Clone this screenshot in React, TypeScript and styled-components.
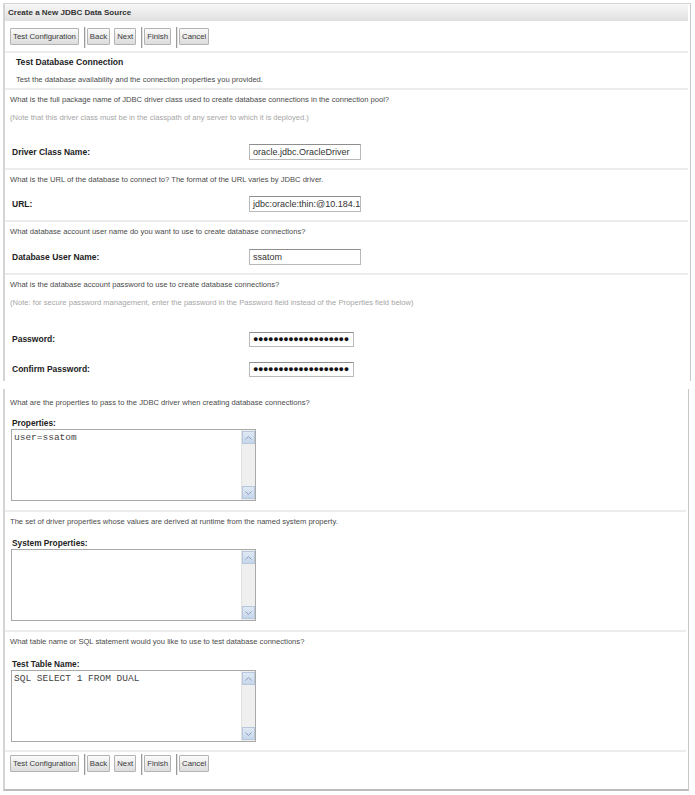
import styled, { createGlobalStyle } from "styled-components";

const GlobalStyle = createGlobalStyle`
  html, body {
    margin: 0;
    padding: 0;
    background: #ffffff;
  }
  body {
    font-family: "Liberation Sans", Arial, sans-serif;
    color: #333;
  }
`;

const Page = styled.div`
  width: 695px;
  height: 795px;
  padding: 3px 0 0 3px;
  box-sizing: border-box;
  display: flex;
  flex-direction: column;
  gap: 8px;
`;

const Panel = styled.div<{ $top?: boolean; $width: number }>`
  width: ${(p) => p.$width}px;
  box-sizing: border-box;
  border-left: 2px solid #d4d4d4;
  border-right: 1px solid #c8c8c8;
  ${(p) =>
    p.$top
      ? `border-top: 1px solid #d4d4d4;`
      : `border-bottom: 2px solid #bdbdbd;`}
  padding-right: 2px;
`;

const TitleBar = styled.div`
  height: 17px;
  display: flex;
  align-items: center;
  padding-left: 3px;
  background: linear-gradient(#f7f7f7, #e0e0e0);
  font-size: 8px;
  font-weight: bold;
  color: #333;
`;

const Toolbar = styled.div<{ $pad: number; $h: number }>`
  display: flex;
  align-items: flex-start;
  padding: ${(p) => p.$pad}px 0 0 5px;
  height: ${(p) => p.$h}px;
  box-sizing: border-box;
`;

const Button = styled.div<{ $gap?: number }>`
  height: 17px;
  box-sizing: border-box;
  padding: 0 2px;
  margin-left: ${(p) => p.$gap ?? 0}px;
  display: flex;
  align-items: center;
  border: 1px solid #b3b3b3;
  border-radius: 1px;
  background: linear-gradient(#fbfbfb, #dcdcdc);
  font-size: 7.8px;
  color: #3a3a3a;
`;

const Sep = styled.div`
  width: 1px;
  height: 21px;
  margin: -1px 2px 0 5px;
  background: #9a9a9a;
  box-shadow: 1px 0 0 #e2e2e2;
`;

const Section = styled.div<{ $pt?: number; $pb?: number }>`
  border-top: 2px solid #ececec;
  padding: ${(p) => p.$pt ?? 0}px 0 ${(p) => p.$pb ?? 0}px 0;
`;

const Line = styled.div<{ $h?: number; $indent?: number; $kind?: "q" | "note" | "head" }>`
  height: ${(p) => p.$h ?? 18}px;
  display: flex;
  align-items: center;
  padding-left: ${(p) => p.$indent ?? 5}px;
  font-size: ${(p) => (p.$kind === "head" ? 8.3 : 7.6)}px;
  font-weight: ${(p) => (p.$kind === "head" ? "bold" : "normal")};
  color: ${(p) => (p.$kind === "note" ? "#a6a6a6" : p.$kind === "head" ? "#222" : "#4a4a4a")};
  white-space: nowrap;
`;

const Heading = styled(Line)`
  font-size: 8.6px;
`;

const Spacer = styled.div<{ $h: number }>`
  height: ${(p) => p.$h}px;
`;

const FieldRow = styled.div`
  height: 22px;
  display: flex;
  align-items: center;
  padding-left: 7px;
`;

const Label = styled.div<{ $w?: number }>`
  width: ${(p) => p.$w ?? 237}px;
  font-size: 8.5px;
  font-weight: bold;
  color: #222;
  white-space: nowrap;
`;

const Input = styled.div<{ $w?: number; $pw?: boolean }>`
  width: ${(p) => p.$w ?? 112}px;
  height: ${(p) => (p.$pw ? 15 : 16)}px;
  box-sizing: border-box;
  border: 1px solid #b9b9b9;
  border-top-color: #8e8e8e;
  background: #fff;
  padding-left: 3px;
  display: flex;
  align-items: center;
  overflow: hidden;
  white-space: nowrap;
  font-size: 9px;
  letter-spacing: ${(p) => (p.$pw ? "-0.4px" : "0")};
  color: ${(p) => (p.$pw ? "#111" : "#333")};
`;

const TextBox = styled.div`
  margin-left: 6px;
  width: 245px;
  height: 72px;
  box-sizing: border-box;
  border: 1px solid #a9a9a9;
  display: flex;
  background: #fff;
`;

const TextContent = styled.div`
  flex: 1;
  padding: 2px 0 0 2px;
  font-family: "Liberation Mono", "Courier New", monospace;
  font-size: 9.5px;
  color: #444;
  white-space: pre;
`;

const Track = styled.div`
  width: 14px;
  background: #efefef;
  border-left: 1px solid #e2e2e2;
  display: flex;
  flex-direction: column;
  justify-content: space-between;
  padding: 1px 0;
  box-sizing: border-box;
`;

const Arrow = styled.div`
  width: 13px;
  height: 13px;
  box-sizing: border-box;
  border: 1px solid #b8c8dc;
  background: linear-gradient(#dfe9f5, #c6d6ea);
  display: flex;
  align-items: center;
  justify-content: center;
`;

function Scroller({ text }: { text: string }) {
  return (
    <TextBox>
      <TextContent>{text}</TextContent>
      <Track>
        <Arrow>
          <svg width="7" height="4" viewBox="0 0 7 4">
            <path d="M0.5 3.5 L3.5 0.5 L6.5 3.5" fill="none" stroke="#8aa0bf" strokeWidth="1" />
          </svg>
        </Arrow>
        <Arrow>
          <svg width="7" height="4" viewBox="0 0 7 4">
            <path d="M0.5 0.5 L3.5 3.5 L6.5 0.5" fill="none" stroke="#8aa0bf" strokeWidth="1" />
          </svg>
        </Arrow>
      </Track>
    </TextBox>
  );
}

function Buttons({ pad, h }: { pad: number; h: number }) {
  return (
    <Toolbar $pad={pad} $h={h}>
      <Button>Test Configuration</Button>
      <Sep />
      <Button>Back</Button>
      <Button $gap={4}>Next</Button>
      <Sep />
      <Button>Finish</Button>
      <Sep />
      <Button>Cancel</Button>
    </Toolbar>
  );
}

const dots = "●".repeat(19);

export default function App() {
  return (
    <>
      <GlobalStyle />
      <Page>
        <Panel $top $width={688}>
          <TitleBar>Create a New JDBC Data Source</TitleBar>
          <Buttons pad={7} h={30} />
          <Section>
            <Heading $h={17} $indent={11} $kind="head">Test Database Connection</Heading>
            <Line $indent={11}>Test the database availability and the connection properties you provided.</Line>
          </Section>
          <Section $pb={5}>
            <Line>What is the full package name of JDBC driver class used to create database connections in the connection pool?</Line>
            <Line $kind="note">(Note that this driver class must be in the classpath of any server to which it is deployed.)</Line>
            <Spacer $h={15} />
            <FieldRow>
              <Label>Driver Class Name:</Label>
              <Input>oracle.jdbc.OracleDriver</Input>
            </FieldRow>
          </Section>
          <Section $pb={5}>
            <Line>What is the URL of the database to connect to? The format of the URL varies by JDBC driver.</Line>
            <Spacer $h={5} />
            <FieldRow>
              <Label>URL:</Label>
              <Input>jdbc:oracle:thin:@10.184.1</Input>
            </FieldRow>
          </Section>
          <Section $pb={5}>
            <Line>What database account user name do you want to use to create database connections?</Line>
            <Spacer $h={6} />
            <FieldRow>
              <Label>Database User Name:</Label>
              <Input>ssatom</Input>
            </FieldRow>
          </Section>
          <Section $pb={1}>
            <Line>What is the database account password to use to create database connections?</Line>
            <Line $kind="note">(Note: for secure password management, enter the password in the Password field instead of the Properties field below)</Line>
            <Spacer $h={17} />
            <FieldRow>
              <Label>Password:</Label>
              <Input $w={105} $pw>{dots}</Input>
            </FieldRow>
            <Spacer $h={8} />
            <FieldRow>
              <Label>Confirm Password:</Label>
              <Input $w={105} $pw>{dots}</Input>
            </FieldRow>
          </Section>
        </Panel>
        <Panel $width={686}>
          <Spacer $h={4} />
          <Line>What are the properties to pass to the JDBC driver when creating database connections?</Line>
          <Spacer $h={5} />
          <Line $h={13} $indent={7} $kind="head">Properties:</Line>
          <Scroller text="user=ssatom" />
          <Spacer $h={9} />
          <Section $pb={9}>
            <Line>The set of driver properties whose values are derived at runtime from the named system property.</Line>
            <Spacer $h={6} />
            <Line $h={13} $indent={7} $kind="head">System Properties:</Line>
            <Scroller text="" />
          </Section>
          <Section $pb={8}>
            <Line>What table name or SQL statement would you like to use to test database connections?</Line>
            <Spacer $h={7} />
            <Line $h={13} $indent={7} $kind="head">Test Table Name:</Line>
            <Scroller text="SQL SELECT 1 FROM DUAL" />
          </Section>
          <Section>
            <Buttons pad={3} h={37} />
          </Section>
        </Panel>
      </Page>
    </>
  );
}
